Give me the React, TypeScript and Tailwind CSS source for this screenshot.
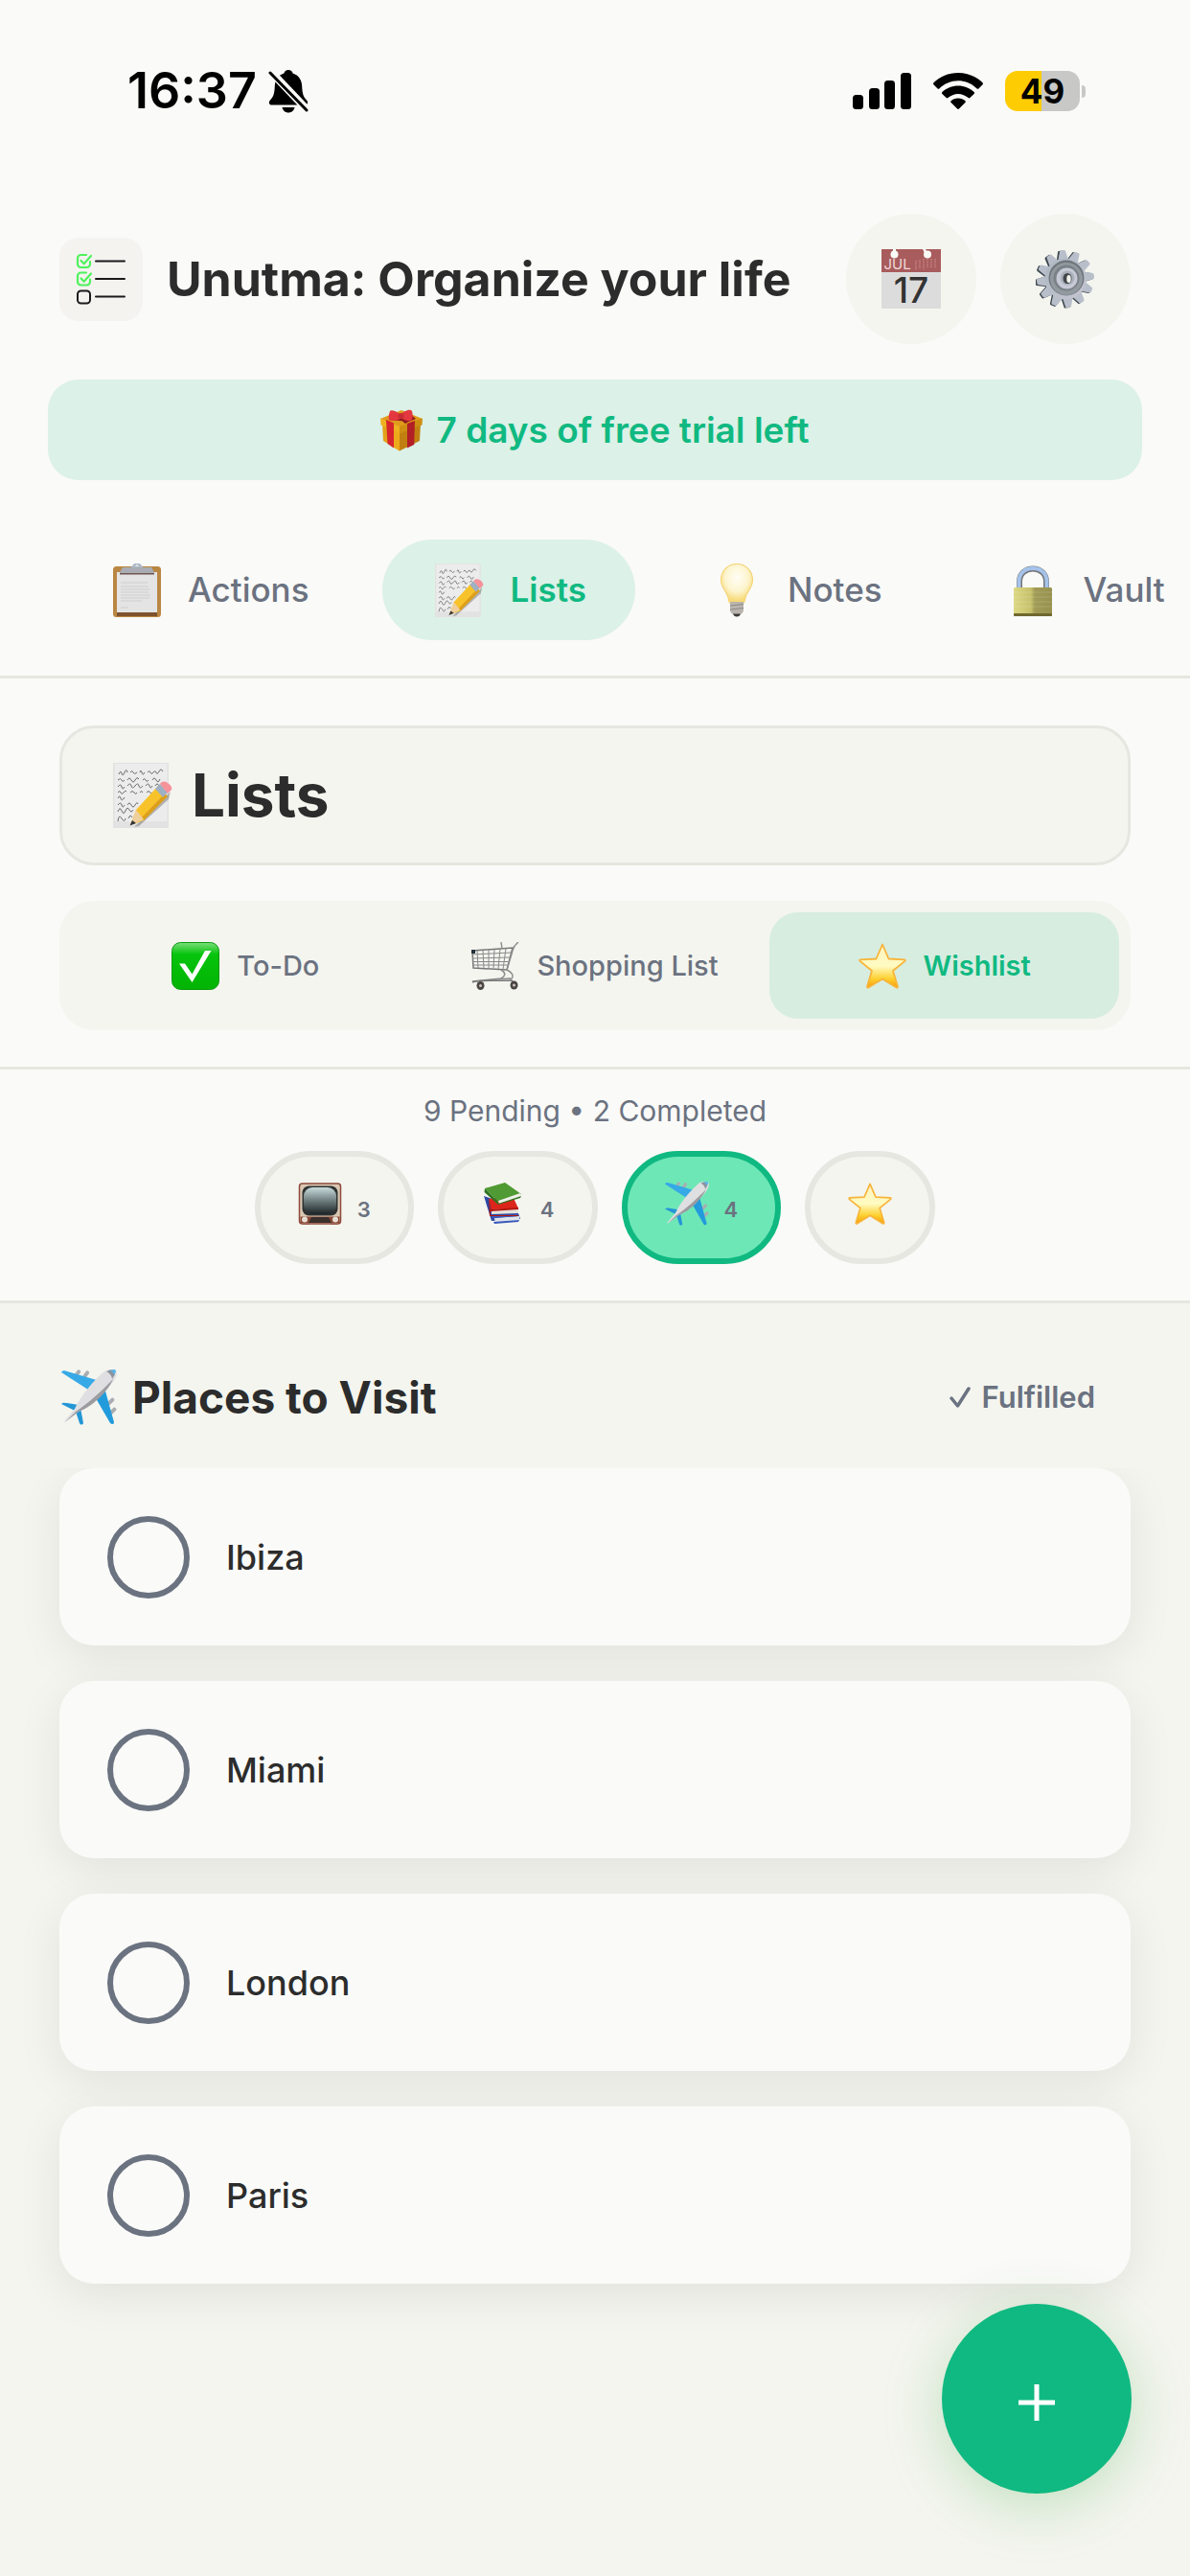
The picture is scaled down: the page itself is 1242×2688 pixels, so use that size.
import { useState } from 'react';
import type { ReactNode } from 'react';
import clsx from 'clsx';

type IconProps = { className?: string };

/* Status bar glyphs */
function BellOff({ className = '' }: IconProps) {
    return (
        <svg viewBox="0 0 42 46" className={className} aria-hidden="true">
            <path d="M21 1c2.500 0 4.300 1.600 4.600 3.600C32 6.500 35 12 35.200 18c.3 8 1.800 11.500 4.800 14.500 2 2.300 1.200 5-1.500 5H3.500c-2.700 0-3.500-2.700-1.500-5 3-3 4.500-6.500 4.800-14.500C7 12 10 6.500 16.400 4.600 16.700 2.600 18.500 1 21 1z" />
            <path d="M14.500 40h13c-.6 3.400-3.200 5.500-6.500 5.500s-5.900-2.100-6.500-5.500z" />
            <path d="M1 1l40 42" stroke="#fafaf8" strokeWidth="8" />
            <path d="M2 4l38 39" stroke="#000" strokeWidth="3" strokeLinecap="round" />
        </svg>
    );
}

function Signal({ className = '' }: IconProps) {
    return (
        <svg viewBox="0 0 61 38" className={className} aria-hidden="true">
            <rect x="0" y="23" width="11" height="15" rx="3.500" />
            <rect x="17" y="16" width="11" height="22" rx="3.500" />
            <rect x="33" y="8" width="11" height="30" rx="3.500" />
            <rect x="50" y="0" width="11" height="38" rx="3.500" />
        </svg>
    );
}

function Wifi({ className = '' }: IconProps) {
    return (
        <svg viewBox="0 0 52 38" className={className} aria-hidden="true">
            <path d="M26 0c10 0 19 3.800 25.500 10.300.6.600.6 1.300.1 1.900l-4.200 4.200c-.5.5-1.200.5-1.800 0C40.300 11.300 33.500 8.300 26 8.300S11.700 11.300 6.400 16.400c-.6.5-1.300.5-1.800 0L.4 12.200c-.5-.6-.5-1.300.1-1.900C7 3.800 16 0 26 0z" />
            <path d="M26 13.500c6.300 0 12.200 2.400 16.600 6.500.6.500.6 1.300 0 1.900l-4.200 4.200c-.5.500-1.200.5-1.800 0-2.900-2.600-6.600-4.200-10.600-4.200s-7.700 1.600-10.600 4.200c-.6.500-1.300.5-1.800 0L9.400 21.900c-.6-.6-.6-1.400 0-1.900 4.400-4.100 10.300-6.500 16.600-6.500z" />
            <path d="M26 26.500c2.900 0 5.400 1 7.400 2.800.6.500.6 1.300 0 1.800l-6.500 6.500c-.5.500-1.300.5-1.800 0l-6.500-6.500c-.6-.5-.6-1.300 0-1.800 2-1.800 4.500-2.800 7.400-2.800z" />
        </svg>
    );
}

function Logo({ className = '' }: IconProps) {
    return (
        <svg viewBox="0 0 87 87" className={className} fill="none" strokeLinecap="round" role="img" aria-label="Unutma">
            <g stroke="#4df25c" strokeWidth="2.200">
                <path d="M28 18h-5.500a3.500 3.500 0 0 0-3.500 3.500v6a3.500 3.500 0 0 0 3.500 3.500h6a3.500 3.500 0 0 0 3.500-3.500V25M22.500 24l3.200 3.200L33 19" />
                <path d="M28 36.500h-5.500A3.500 3.500 0 0 0 19 40v6a3.500 3.500 0 0 0 3.500 3.500h6A3.500 3.500 0 0 0 32 46v-2.500M22.500 42.500l3.200 3.200L33 37.500" />
            </g>
            <g stroke="#1a1a1a" strokeWidth="2">
                <rect x="19" y="55.500" width="13" height="13" rx="3.500" />
                <path d="M38 24.500h30M38 43h30M38 61.500h30" />
            </g>
        </svg>
    );
}

/* Picture icons */
function CalendarIcon({ className = '' }: IconProps) {
    return (
        <svg viewBox="0 0 62 62" className={clsx('overflow-visible', className)} aria-hidden="true">
            <rect width="62" height="62" fill="#dcdcdc" />
            <rect width="62" height="24" fill="#a95c5d" />
            <g fill="#fafaf6">
                <path d="M12 0h3v4h-3zM43 0h3l2 4h-3z" />
                <circle cx="13.500" cy="5.500" r="4" />
                <circle cx="48" cy="5.500" r="4" />
            </g>
            <path d="M36 12v9M40 11v10M44 10v11M48 10v10M52 10v9M56 10v9" stroke="#c58384" strokeWidth="1.500" strokeDasharray="1.500 1" />
            <text x="2.500" y="20.500" fontSize="15" fill="#f0d9d9" fontFamily="Inter, sans-serif">JUL</text>
            <text x="31" y="56" fontSize="37" textAnchor="middle" fill="#333" fontWeight="500" fontFamily="Inter, sans-serif">17</text>
        </svg>
    );
}

function GearIcon({ className = '' }: IconProps) {
    const teeth = Array.from({ length: 12 });
    return (
        <svg viewBox="0 0 62 62" className={className} aria-hidden="true">
            <defs>
                <linearGradient id="gear-body" x1="0" y1="0" x2="1" y2="1">
                    <stop offset="0" stopColor="#a9b6c0" />
                    <stop offset="1" stopColor="#c9c6d2" />
                </linearGradient>
            </defs>
            {teeth.map((_, i) => (
                <path key={`s${i}`} d="M25.500 12L28 2q.3-1 1.300-1h4q1 0 1.200 1l2 10z" fill="#3f4850" transform={`translate(-1.500 .5) rotate(${i * 30 - 7} 31 31)`} />
            ))}
            {teeth.map((_, i) => (
                <path key={i} d="M25.500 12L28.500 2q.3-1 1.300-1h3.500q1 0 1.200 1l2 10z" fill="#b9bfca" transform={`rotate(${i * 30 - 7} 31 31)`} />
            ))}
            <circle cx="31" cy="31" r="21.500" fill="url(#gear-body)" />
            <circle cx="32" cy="30" r="18.500" fill="#6f767c" />
            <circle cx="32" cy="31" r="17" fill="#92999f" />
            <circle cx="32" cy="30" r="13.500" fill="#7a8187" />
            <circle cx="32.500" cy="30.500" r="11" fill="#c7cad6" />
            <circle cx="33" cy="30" r="7.500" fill="#aab1ba" />
            <ellipse cx="33" cy="30.500" rx="4.500" ry="5.500" fill="#43474b" />
            <ellipse cx="34.500" cy="31" rx="2.200" ry="4" fill="#f4f5ef" />
        </svg>
    );
}

function GiftIcon({ className = '' }: IconProps) {
    return (
        <svg viewBox="0 0 44 44" className={className} aria-hidden="true">
            <path d="M0 10L22 1l22 9-21 10z" fill="#e09a1c" />
            <path d="M2 15l18 7v21.500L3 33z" fill="#e3a21a" />
            <path d="M20 22l22-8-1 19-21 10.500z" fill="#c07f10" />
            <path d="M14 18.500l6 3V43.500l-6-4z" fill="#eda91c" />
            <path d="M0 9.500l20 8.500v6.500L.5 16.500z" fill="#efb021" />
            <path d="M20 18l24-8.500-.5 7L20 25.500z" fill="#cd8e12" />
            <path d="M6 11l8 3.500v26L7.500 36z" fill="#d6252c" />
            <path d="M28 15l8-3-.8 25L28 40.500z" fill="#b21f25" />
            <path d="M9 11L30 4l7 6-7 3zM13 5l22 5-9 5z" fill="#8e1a1e" />
            <path d="M10 2c1-2 9 1 11 4 3-4 10-7 12-4 1 3 1 8-1 10-3 1-8-1-10-3-3 3-10 4-13 2-1-2 0-6 1-9z" fill="#e3383f" />
            <circle cx="21.500" cy="7" r="3" fill="#c92c33" />
        </svg>
    );
}

function ClipboardIcon({ className = '' }: IconProps) {
    return (
        <svg viewBox="0 0 56 56" className={className} aria-hidden="true">
            <rect x="3" y="3" width="50" height="53" rx="3.500" fill="#b98743" />
            <rect x="7" y="50" width="42" height="5" fill="#7e522c" />
            <rect x="7" y="9" width="42" height="42" fill="#e4e4e4" />
            <path d="M11 20h28M11 24h29M11 27h30M11 30h29M11 33h31M11 36h30M11 39h22M11 46h8" stroke="#cdcdcd" strokeWidth="1.200" />
            <path d="M22 4c3 0 3-4 6-4s3 4 6 4z" fill="none" stroke="#aeb9c6" strokeWidth="2.500" />
            <path d="M13 4h30l3 5v2H10V9z" fill="#a9acb2" />
            <path d="M10 10h36v1.500H10z" fill="#6f5550" />
        </svg>
    );
}

function MemoIcon({ className = '' }: IconProps) {
    return (
        <svg viewBox="0 0 62 68" className={className} aria-hidden="true">
            <rect x="0" y="0" width="58" height="68" fill="#e2e2e2" />
            <rect x="1.500" y="1" width="55" height="60" fill="#ececec" />
            <g fill="none" stroke="#6a6a6a">
                <path d="M6 12q2-5 3-1t3-1 3 0M18 10q2-3 3 0t4 0M28 10q1-4 2 0t3 0M36 10q2-3 3 0t3 0 3 0 3-1 4 0" />
                <path d="M5 18q3-3 4 0t3 0M15 18q2-4 4 0t4 0 4-1M31 18q2-3 3 0t3 0M41 18q2-4 4 0t4-1" />
                <path d="M5 25q3-4 4 0t3 0M15 24q3-4 4 0t4 0 4 0 4 0M34 24q3-4 4 0t3 0M44 24q2-4 4 0" />
                <path d="M5 31q2-3 3 0t3 0 3-1M18 31q2-3 4 0t3 0M28 31q2-3 3 0M35 31q2-3 4 0t4-1" />
                <path d="M5 37q2-4 3 0t4-1M5 44q3-4 4 0t3 0M15 44q2-4 4 0t4 0 3-1M5 51q2-6 4-1t4 0 4-1 4 0M5 61q1-8 4-3t4 0M16 58q2-5 4-1" />
            </g>
            <path d="M22 67L60 30l-2 8-31 28z" fill="#000" opacity=".25" />
            <path d="M24 49l23-25 9 10-24 26-14 5z" fill="#f8c32a" />
            <path d="M30 57l24-25 3 3-25 25z" fill="#dc9f1b" />
            <path d="M24 49l8 10-14 6z" fill="#efcf9c" />
            <path d="M20 60l4 3-6.500 2.500z" fill="#333" />
            <path d="M44 27l5-5 8 9-5 5z" fill="#9fb0c2" />
            <path d="M49 22c2-3 5-3 8-1s5 5 4 7l-4 4z" fill="#f5929a" />
        </svg>
    );
}

function BulbIcon({ className = '' }: IconProps) {
    return (
        <svg viewBox="0 0 56 56" className={className} aria-hidden="true">
            <defs>
                <radialGradient id="bulb-glow" cx=".5" cy=".35" r=".6">
                    <stop offset="0" stopColor="#fffdf5" />
                    <stop offset=".6" stopColor="#fdf5cf" />
                    <stop offset="1" stopColor="#f7d977" />
                </radialGradient>
            </defs>
            <path d="M28 .5c9.500 0 16.500 7.500 16.500 16.500 0 8-5 11-7 17-1 3-1 5-2 7h-15c-1-2-1-4-2-7-2-6-7-9-7-17C11.500 8 18.500.5 28 .5z" fill="url(#bulb-glow)" stroke="#f5d67a" strokeWidth="1.200" />
            <path d="M21 40h14v9c0 2-2 3-3 4h-8c-1-1-3-2-3-4z" fill="#b9b4ae" />
            <path d="M21 44l14-1.500M21 48l14-1.500" stroke="#8d8984" />
            <path d="M24 52.500h8c-.5 2-2 3-4 3s-3.500-1-4-3z" fill="#3f3d3b" />
        </svg>
    );
}

function LockIcon({ className = '' }: IconProps) {
    return (
        <svg viewBox="0 0 56 56" className={className} aria-hidden="true">
            <defs>
                <linearGradient id="lock-body">
                    <stop offset="0" stopColor="#dcd883" />
                    <stop offset=".45" stopColor="#c6c06c" />
                    <stop offset=".55" stopColor="#a19b57" />
                    <stop offset="1" stopColor="#98924f" />
                </linearGradient>
            </defs>
            <path d="M14 27V19C14 10.500 20.500 5.500 28 5.500S42 10.500 42 19v8" fill="none" stroke="#76767a" strokeWidth="6" />
            <path d="M13.500 27V19C13.500 10 20 5 28 5s14.500 5 14.500 14v8" fill="none" stroke="#a5c3ea" strokeWidth="4" />
            <rect x="8" y="25" width="40" height="30" rx="1.500" fill="url(#lock-body)" />
            <path d="M8 30h40M8 35h40M8 40h40M8 45h40" stroke="#fff" strokeOpacity=".15" />
            <rect x="8" y="52" width="40" height="3" rx="1" fill="#6f682f" />
        </svg>
    );
}

function CheckIcon({ className = '' }: IconProps) {
    return (
        <svg viewBox="0 0 50 50" className={className} aria-hidden="true">
            <defs>
                <linearGradient id="check-body" x1="0" y1="0" x2="0" y2="1">
                    <stop offset="0" stopColor="#7ade7a" />
                    <stop offset=".25" stopColor="#06c40d" />
                    <stop offset="1" stopColor="#03b303" />
                </linearGradient>
            </defs>
            <rect x=".5" y=".5" width="49" height="49" rx="9" fill="url(#check-body)" stroke="#0a9a10" />
            <path d="M8 22.500h6l7.500 11L35 9h6.500L21.500 42z" fill="#fff" />
        </svg>
    );
}

function CartIcon({ className = '' }: IconProps) {
    return (
        <svg viewBox="0 0 50 50" className={className} fill="none" aria-hidden="true">
            <path d="M1 9l42-3-6 23L2 27z" stroke="#767676" strokeWidth="1.500" />
            <path d="M1 13l41-2M1 17l40-1M1 20.500h39M2 24h37M6 9l1 18M12 8.500l1 19M18 8l0 19.500M24 7.500l-1 20M30 7l-2 21M36 6.500l-3 22" stroke="#8a8a8a" />
            <path d="M49 0c-5 4-5 6-6 9l-6 20c6 3 8 7 4 10M31 0l1 7M31 29c5 3 5 6 0 9L1 41M41 38l-32 2" stroke="#8f8f8f" strokeWidth="1.500" />
            <rect x="0" y="8" width="4" height="4" fill="#22313b" />
            <path d="M1 42c5-3 30-1 41-2l3 4" stroke="#777" strokeWidth="1.500" />
            <ellipse cx="9.500" cy="45.500" rx="4" ry="4.500" fill="#4b4644" />
            <ellipse cx="44.500" cy="45" rx="4" ry="4.500" fill="#4b4644" />
            <circle cx="9.500" cy="45.500" r="1.500" fill="#c9c4c2" />
            <circle cx="44.500" cy="45" r="1.500" fill="#c9c4c2" />
        </svg>
    );
}

function StarIcon({ className = '' }: IconProps) {
    return (
        <svg viewBox="0 0 50 48" className={className} aria-hidden="true">
            <defs>
                <linearGradient id="star-body" x1="0" y1="0" x2="0" y2="1">
                    <stop offset="0" stopColor="#fff3c0" />
                    <stop offset=".5" stopColor="#fffbc2" />
                    <stop offset=".8" stopColor="#fdcf2c" />
                    <stop offset="1" stopColor="#f79a0c" />
                </linearGradient>
            </defs>
            <path
                d="M25 1.500l6.500 15 16.500.8c1 .2 1 1 .4 1.600L36 29l5 16.500c.2 1-.6 1.500-1.400 1L25 37.500 10.400 46.500c-.8.5-1.600 0-1.400-1L14 29 1.600 18.900c-.6-.6-.6-1.400.4-1.600l16.500-.8z"
                fill="url(#star-body)"
                stroke="#f8b43a"
                strokeWidth="1.800"
                strokeLinejoin="round"
            />
        </svg>
    );
}

function TvIcon({ className = '' }: IconProps) {
    return (
        <svg viewBox="0 0 46 46" className={className} aria-hidden="true">
            <defs>
                <linearGradient id="tv-screen" x1="0" y1="0" x2="0" y2="1">
                    <stop offset="0" stopColor="#c8dcdc" />
                    <stop offset=".5" stopColor="#6d7c7e" />
                    <stop offset="1" stopColor="#1d2426" />
                </linearGradient>
            </defs>
            <path d="M5 40h7v5H5zM34 40h7v5h-7z" fill="#b6a38f" />
            <rect x="1.500" y="2" width="43" height="42" rx="3" fill="#d9c8b4" stroke="#8e4a3a" strokeWidth="1.500" />
            <rect x="4.500" y="4.500" width="37" height="31" rx="7" fill="#2f3332" />
            <rect x="6" y="6" width="34" height="28" rx="9" fill="url(#tv-screen)" />
            <path d="M2.500 36.500h41V43h-41z" fill="#8b4a37" />
            <path d="M14 37h18l3 6H11z" fill="#3c302c" />
            <circle cx="7" cy="39.500" r="3" fill="#e6dfd4" />
            <circle cx="39" cy="39.500" r="3" fill="#e6dfd4" />
        </svg>
    );
}

function BooksIcon({ className = '' }: IconProps) {
    return (
        <svg viewBox="0 0 46 46" className={className} aria-hidden="true">
            <path d="M3 15l8 26 30-2-4-12z" fill="#2c4aa5" />
            <path d="M14 38l26-2v4l-25 3z" fill="#dfe3ea" />
            <path d="M11 36l28-2v2l-27 2zM13 42l27-2-1 2-25 2z" fill="#3a59bb" />
            <path d="M8 18l25-3 6 13-28 3z" fill="#dc251b" />
            <path d="M11 29l28-1v5l-28 1z" fill="#e5e1dc" />
            <path d="M8 18l2 11 29-2v2l-29 2v4h29v1H9z" fill="#b2160f" />
            <path d="M4 7L25 1l17 12-24 8z" fill="#4f9a32" />
            <path d="M18 20l23-8v4l-22 7z" fill="#f0efea" />
            <path d="M4 7l14 14v3L3.500 11zM18 23l24-8-1 2-23 7z" fill="#2f7420" />
        </svg>
    );
}

function PlaneIcon({ className = '' }: IconProps) {
    return (
        <svg viewBox="0 0 58 58" className={className} aria-hidden="true">
            <g fill="#a9adb2">
                <rect x="15" y="0" width="4" height="9" rx="2" transform="rotate(35 17 4)" />
                <rect x="24" y="1" width="4" height="9" rx="2" transform="rotate(35 26 5)" />
                <rect x="50" y="29" width="4" height="9" rx="2" transform="rotate(45 52 33)" />
                <rect x="52" y="39" width="4" height="9" rx="2" transform="rotate(45 54 43)" />
            </g>
            <path d="M0 3c1-2 4-2 6-1l34 10-9 11z" fill="#36a9e6" />
            <path d="M36 30l9-11 10 36c0 2-2 3-4 1z" fill="#229bdc" />
            <path d="M0 36c2-2 4-1 6-1l12 2-4 6zM15 44l5-4 3 16c-1 2-3 2-4 0z" fill="#2396d6" />
            <path d="M4 55c-1 0-1-1 0-2l10-12C20 28 34 11 45 2c5-3 12-3 12-1 2 3 0 8-3 12C45 25 30 39 18 44z" fill="#dfdfe1" />
            <path d="M4 55l11-11c12-8 28-22 39-34-6 14-22 29-36 34z" fill="#9b9ba0" />
            <path d="M47 2c2 1 6 4 6 8l3-5-1-4c-3-1-5 0-8 1z" fill="#8c949c" />
            <path d="M50 1c2 0 5 2 5 5l2-4-1-2z" fill="#55b4e8" />
        </svg>
    );
}

function Divider() {
    return <div className="h-[3px] bg-[#e5e7e0]" />;
}

function StatusBar() {
    return (
        <div className="flex h-[141px] items-center justify-between pt-[49px] pr-[109px] pl-[133px] text-black">
            <div className="flex items-center gap-3">
                <span className="text-[52px] leading-none font-semibold">16:37</span>
                <BellOff className="h-[46px] w-[42px]" />
            </div>
            <div className="flex items-center">
                <Signal className="h-[38px] w-[61px]" />
                <Wifi className="ml-[23px] h-[38px] w-[52px]" />
                <div className="ml-[23px] flex h-[42px] w-[78px] items-center justify-center rounded-[13px] bg-linear-to-r from-[#fecc02] from-49% to-[#c8c8c6] to-49% text-[35px] leading-none font-bold">
                    49
                </div>
                <div className="ml-[2px] h-[13px] w-[4px] rounded-r-full bg-[#c8c8c6]" />
            </div>
        </div>
    );
}

function RoundButton({ label, children }: { label: string; children: ReactNode }) {
    return (
        <button type="button" aria-label={label} className="flex size-[136px] shrink-0 items-center justify-center rounded-full bg-[#f4f5ef]">
            {children}
        </button>
    );
}

const TABS = [
    { name: 'Actions', icon: <ClipboardIcon className="size-14" /> },
    { name: 'Lists', icon: <MemoIcon className="h-14 w-[51px]" /> },
    { name: 'Notes', icon: <BulbIcon className="size-14" /> },
    { name: 'Vault', icon: <LockIcon className="size-14" /> },
];

const SEGMENTS = [
    { name: 'To-Do', icon: <CheckIcon className="size-[50px]" /> },
    { name: 'Shopping List', icon: <CartIcon className="size-[50px]" /> },
    { name: 'Wishlist', icon: <StarIcon className="size-[50px]" /> },
];

const CATEGORIES = [
    { name: 'To Watch', count: 3, icon: <TvIcon className="size-[46px]" /> },
    { name: 'To Read', count: 4, icon: <BooksIcon className="size-[46px]" /> },
    { name: 'Places to Visit', count: 4, icon: <PlaneIcon className="size-[46px]" /> },
    { name: 'Other', count: 0, icon: <StarIcon className="size-[46px]" /> },
];

const PLACES = ['Ibiza', 'Miami', 'London', 'Paris'];

function PlaceCard({ name }: { name: string }) {
    return (
        <li>
            <label className="flex h-[185px] items-center gap-[38px] rounded-[36px] bg-[#fafaf8] px-[50px] text-[36px] font-medium text-[#2c2c2c] shadow-[0_12px_48px_rgba(0,0,0,0.08)]">
                <input type="checkbox" className="size-[86px] shrink-0 appearance-none rounded-full border-6 border-[#6b7280] checked:bg-[#10b981]" />
                {name}
            </label>
        </li>
    );
}

export default function App() {
    const [tab, setTab] = useState('Lists');
    const [segment, setSegment] = useState('Wishlist');
    const [category, setCategory] = useState('Places to Visit');

    return (
        <div className="flex min-h-screen flex-col bg-[#fafaf8] font-[Inter,sans-serif] text-[#2c2c2c]">
            <StatusBar />

            <header className="flex items-center gap-[25px] px-[62px] pt-[82px]">
                <div className="size-[87px] shrink-0 rounded-[20px] bg-[#f5f3f0]">
                    <Logo className="size-full" />
                </div>
                <h1 className="flex-1 text-[50px] leading-none font-bold whitespace-nowrap">Unutma: Organize your life</h1>
                <RoundButton label="Calendar">
                    <CalendarIcon className="size-[62px]" />
                </RoundButton>
                <RoundButton label="Settings">
                    <GearIcon className="size-[62px]" />
                </RoundButton>
            </header>

            <div className="mx-[50px] mt-[37px] flex h-[105px] items-center justify-center gap-[14px] rounded-[32px] bg-[#dcf1e7] text-[37px] font-semibold text-[#10b981]">
                <GiftIcon className="size-11" />
                7 days of free trial left
            </div>

            <nav className="flex gap-[25px] overflow-x-auto px-[62px] pt-[62px] pb-[37px] [scrollbar-width:none]">
                {TABS.map((t) => (
                    <button
                        key={t.name}
                        type="button"
                        onClick={() => setTab(t.name)}
                        className={clsx(
                            'flex h-[105px] shrink-0 items-center gap-[23px] rounded-full px-[51px] text-[35px]',
                            t.name === tab ? 'bg-[#dcf1e7] font-semibold text-[#10b981]' : 'font-medium text-[#6b7280]',
                        )}
                    >
                        <span className="flex w-[60px] justify-center">{t.icon}</span>
                        {t.name}
                    </button>
                ))}
            </nav>
            <Divider />

            <section className="px-[62px] pt-[49px] pb-[38px]">
                <h2 className="flex h-[146px] items-center gap-5 rounded-[36px] border-3 border-[#e5e7e0] bg-[#f4f5ef] px-[53px] text-[62px] leading-none font-bold">
                    <MemoIcon className="h-[68px] w-[62px]" />
                    Lists
                </h2>
                <div className="mt-[37px] grid grid-cols-3 rounded-[36px] bg-[#f4f5ef] p-3">
                    {SEGMENTS.map((s) => (
                        <button
                            key={s.name}
                            type="button"
                            onClick={() => setSegment(s.name)}
                            className={clsx(
                                'flex h-[111px] items-center justify-center gap-[18px] rounded-[30px] text-[29px]',
                                s.name === segment ? 'bg-[#d7ede0] font-semibold text-[#10b981]' : 'font-medium text-[#6b7280]',
                            )}
                        >
                            {s.icon}
                            {s.name}
                        </button>
                    ))}
                </div>
            </section>
            <Divider />

            <section className="pt-[25px] pb-[38px]">
                <p className="text-center text-[30px] leading-9 text-[#6b7280]">9 Pending • 2 Completed</p>
                <div className="mt-6 flex justify-center gap-[25px]">
                    {CATEGORIES.map((c) => (
                        <button
                            key={c.name}
                            type="button"
                            aria-label={c.name}
                            onClick={() => setCategory(c.name)}
                            className={clsx(
                                'flex h-[118px] items-center gap-4 rounded-full border-6 px-[39px] pb-2',
                                c.name === category ? 'border-[#10b981] bg-[#6ee7b7]' : 'border-[#e5e7e0] bg-[#f4f5ef]',
                            )}
                        >
                            {c.icon}
                            {c.count > 0 && <span className="pt-3 text-[22px] font-semibold text-[#6b7280]">{c.count}</span>}
                        </button>
                    ))}
                </div>
            </section>
            <Divider />

            <main className="flex-1 bg-[#f4f5ef]">
                <div className="flex h-[172px] items-center justify-between pt-6 pr-[99px] pl-[64px]">
                    <h3 className="flex items-center gap-4 text-[46px] leading-none font-bold">
                        <PlaneIcon className="size-[58px]" />
                        Places to Visit
                    </h3>
                    <button type="button" className="flex items-center gap-[11px] text-[31px] font-semibold text-[#6b7280]">
                        <svg viewBox="0 0 22 22" className="size-[22px]" fill="none" stroke="currentColor" strokeWidth="3.500" strokeLinecap="round" strokeLinejoin="round" aria-hidden="true">
                            <path d="M2 12l6.500 8L20 2" />
                        </svg>
                        Fulfilled
                    </button>
                </div>
                <ul className="flex flex-col gap-[37px] overflow-hidden px-[62px] pb-[120px]">
                    {PLACES.map((p) => (
                        <PlaceCard key={p} name={p} />
                    ))}
                </ul>
            </main>

            <button
                type="button"
                aria-label="Add item"
                className="fixed right-[61px] bottom-[86px] flex size-[198px] items-center justify-center rounded-full bg-[#10b981] pt-2 shadow-[0_12px_60px_rgba(76,175,80,0.3)]"
            >
                <svg viewBox="0 0 38 38" className="size-[38px]" stroke="#fff" strokeWidth="5" aria-hidden="true">
                    <path d="M19 0v38M0 19h38" />
                </svg>
            </button>
        </div>
    );
}
